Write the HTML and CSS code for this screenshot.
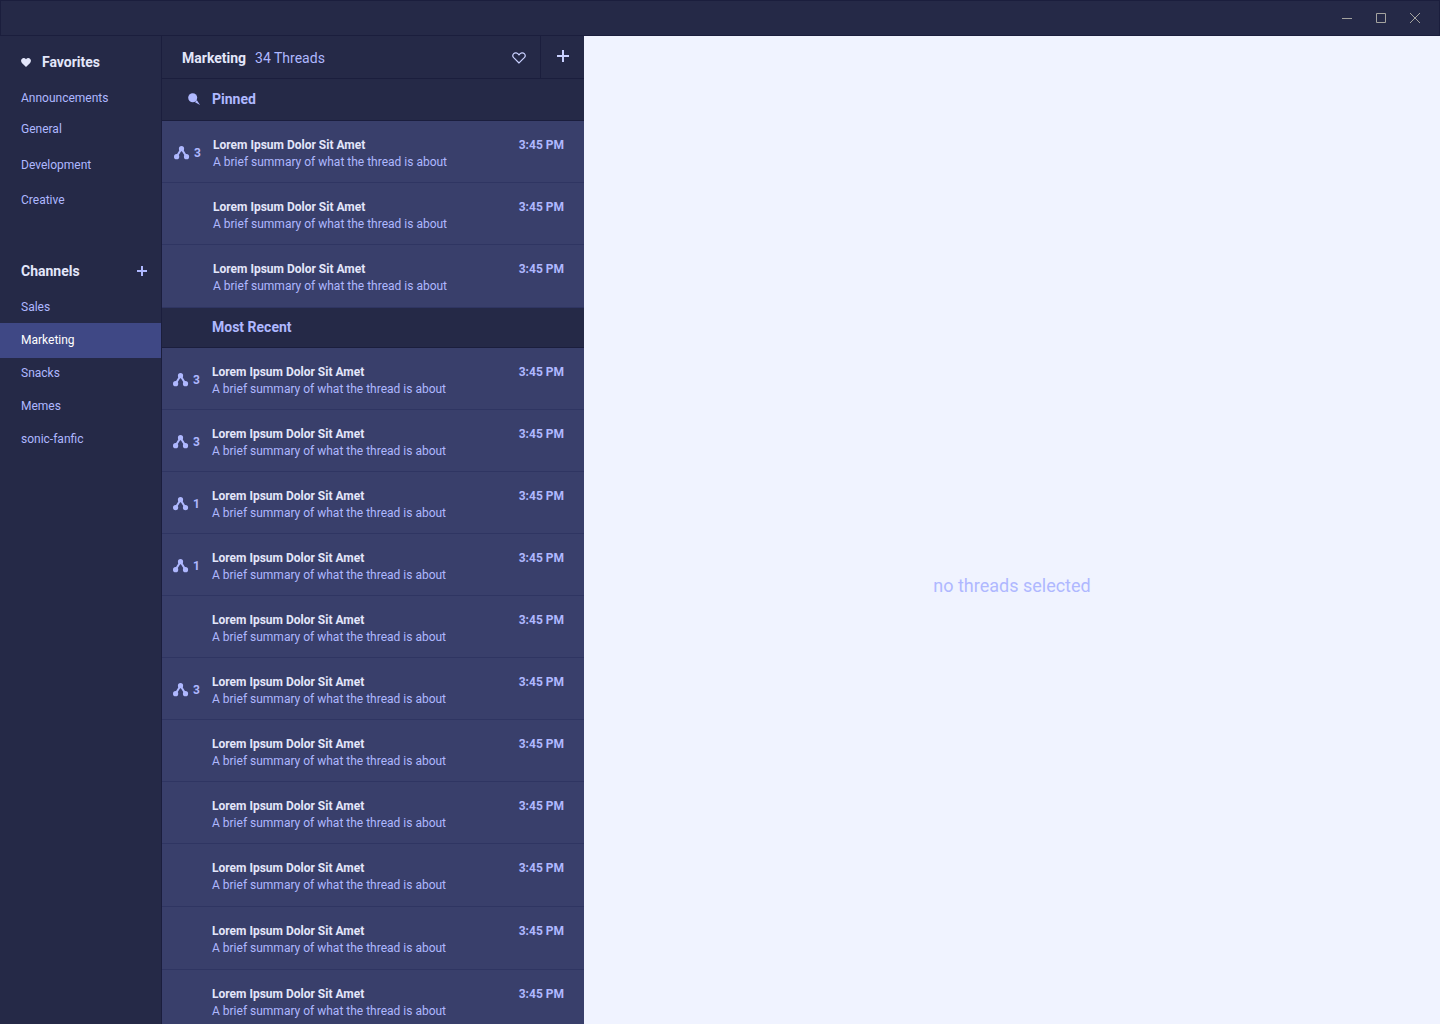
FILE: index.html
```html
<!DOCTYPE html>
<html lang="en">
<head>
<meta charset="utf-8">
<meta name="viewport" content="width=device-width, initial-scale=1">
<title>Threads</title>
<link rel="stylesheet" href="styles.css">
</head>
<body>
<svg class="sprite" aria-hidden="true">
  <symbol id="branch" viewBox="0 0 16 14">
    <path d="M7.500 2.700 2.500 10.700M7.500 2.700l5 8" fill="none" stroke="currentColor" stroke-width="2"/>
    <circle cx="7.500" cy="2.700" r="2.600" fill="currentColor"/>
    <circle cx="2.600" cy="10.700" r="2.600" fill="currentColor"/>
    <circle cx="12.500" cy="10.700" r="2.600" fill="currentColor"/>
  </symbol>
</svg>
<div class="app">
  <header class="titlebar">
    <button class="window-button" aria-label="Minimize"><svg width="10" height="10" viewBox="0 0 10 10"><path d="M0 5.5h10"/></svg></button>
    <button class="window-button" aria-label="Maximize"><svg width="10" height="10" viewBox="0 0 10 10"><path d="M.5.5h9v9h-9z"/></svg></button>
    <button class="window-button" aria-label="Close"><svg width="10" height="10" viewBox="0 0 10 10"><path d="m0 0 10 10M10 0 0 10"/></svg></button>
  </header>
  <div class="workspace">
    <nav class="sidebar">
      <section>
        <h2 class="sidebar-title">
          <svg class="heart" width="10" height="9" viewBox="0 0 10 9"><path d="M5 9 .9 4.9C-.2 3.800-.2 1.900.8.9 1.900-.2 3.900-.2 5 1.300 6.100-.2 8.100-.2 9.200.9c1 1 1 2.900-.1 4z" fill="currentColor"/></svg>
          Favorites
        </h2>
        <ul class="favorites">
          <li><a href="#">Announcements</a></li>
          <li><a href="#">General</a></li>
          <li><a href="#">Development</a></li>
          <li><a href="#">Creative</a></li>
        </ul>
      </section>
      <section class="channels-section">
        <h2 class="sidebar-title">
          Channels
          <button class="add-channel" aria-label="Add channel"><svg width="10" height="10" viewBox="0 0 10 10"><path d="M5 0v10M0 5h10" stroke="currentColor" stroke-width="2"/></svg></button>
        </h2>
        <ul class="channels">
          <li><a href="#">Sales</a></li>
          <li><a class="active" href="#" aria-current="page">Marketing</a></li>
          <li><a href="#">Snacks</a></li>
          <li><a href="#">Memes</a></li>
          <li><a href="#">sonic-fanfic</a></li>
        </ul>
      </section>
    </nav>
    <section class="threads">
      <header class="threads-header">
        <h1>Marketing</h1>
        <span class="count">34 Threads</span>
        <button class="favorite" aria-label="Favorite"><svg width="14" height="12" viewBox="0 0 14 12"><path d="M7 11 1.700 5.700C.6 4.500.6 2.800 1.700 1.700 3 .4 5.300.6 7 2.800 8.700.6 11 .4 12.300 1.700c1.100 1.100 1.100 2.800 0 4z" fill="none" stroke="currentColor" stroke-width="1.200"/></svg></button>
        <button class="new-thread" aria-label="New thread"><svg width="12" height="12" viewBox="0 0 12 12"><path d="M6 0v12M0 6h12" stroke="currentColor" stroke-width="2"/></svg></button>
      </header>
      <div class="scroll">
        <h2 class="group pinned">
          <svg width="12" height="12" viewBox="0 0 12 12"><path d="M7 9.200 12 12 8.800 7z" fill="currentColor"/><circle cx="4.700" cy="4.700" r="4.500" fill="currentColor"/></svg>
          Pinned
        </h2>
        <ul class="list list-pinned">
          <li class="thread"><span class="replies"><svg width="16" height="14"><use href="#branch"/></svg>3</span><div class="body"><h3>Lorem Ipsum Dolor Sit Amet</h3><p>A brief summary of what the thread is about</p></div><time>3:45 PM</time></li>
          <li class="thread"><span class="replies"></span><div class="body"><h3>Lorem Ipsum Dolor Sit Amet</h3><p>A brief summary of what the thread is about</p></div><time>3:45 PM</time></li>
          <li class="thread"><span class="replies"></span><div class="body"><h3>Lorem Ipsum Dolor Sit Amet</h3><p>A brief summary of what the thread is about</p></div><time>3:45 PM</time></li>
        </ul>
        <h2 class="group recent">Most Recent</h2>
        <ul class="list list-recent">
          <li class="thread"><span class="replies"><svg width="16" height="14"><use href="#branch"/></svg>3</span><div class="body"><h3>Lorem Ipsum Dolor Sit Amet</h3><p>A brief summary of what the thread is about</p></div><time>3:45 PM</time></li>
          <li class="thread"><span class="replies"><svg width="16" height="14"><use href="#branch"/></svg>3</span><div class="body"><h3>Lorem Ipsum Dolor Sit Amet</h3><p>A brief summary of what the thread is about</p></div><time>3:45 PM</time></li>
          <li class="thread"><span class="replies"><svg width="16" height="14"><use href="#branch"/></svg>1</span><div class="body"><h3>Lorem Ipsum Dolor Sit Amet</h3><p>A brief summary of what the thread is about</p></div><time>3:45 PM</time></li>
          <li class="thread"><span class="replies"><svg width="16" height="14"><use href="#branch"/></svg>1</span><div class="body"><h3>Lorem Ipsum Dolor Sit Amet</h3><p>A brief summary of what the thread is about</p></div><time>3:45 PM</time></li>
          <li class="thread"><span class="replies"></span><div class="body"><h3>Lorem Ipsum Dolor Sit Amet</h3><p>A brief summary of what the thread is about</p></div><time>3:45 PM</time></li>
          <li class="thread"><span class="replies"><svg width="16" height="14"><use href="#branch"/></svg>3</span><div class="body"><h3>Lorem Ipsum Dolor Sit Amet</h3><p>A brief summary of what the thread is about</p></div><time>3:45 PM</time></li>
          <li class="thread"><span class="replies"></span><div class="body"><h3>Lorem Ipsum Dolor Sit Amet</h3><p>A brief summary of what the thread is about</p></div><time>3:45 PM</time></li>
          <li class="thread"><span class="replies"></span><div class="body"><h3>Lorem Ipsum Dolor Sit Amet</h3><p>A brief summary of what the thread is about</p></div><time>3:45 PM</time></li>
          <li class="thread"><span class="replies"></span><div class="body"><h3>Lorem Ipsum Dolor Sit Amet</h3><p>A brief summary of what the thread is about</p></div><time>3:45 PM</time></li>
          <li class="thread"><span class="replies"></span><div class="body"><h3>Lorem Ipsum Dolor Sit Amet</h3><p>A brief summary of what the thread is about</p></div><time>3:45 PM</time></li>
          <li class="thread"><span class="replies"></span><div class="body"><h3>Lorem Ipsum Dolor Sit Amet</h3><p>A brief summary of what the thread is about</p></div><time>3:45 PM</time></li>
        </ul>
      </div>
    </section>
    <main class="reader"><p>no threads selected</p></main>
  </div>
</div>
</body>
</html>
```
FILE: styles.css
```css
:root {
  --dark: #252947;
  --line: #1b1e3d;
  --row: #393f6b;
  --row-line: #2f3562;
  --accent: #afb8ff;
  --light: #e3e6fa;
}

* { box-sizing: border-box; }

body {
  margin: 0;
  font-family: Roboto, sans-serif;
  font-size: 12px;
  line-height: 17px;
  color: var(--accent);
  background: #f0f3ff;
}

h1, h2, h3, p, ul { margin: 0; padding: 0; }
ul { list-style: none; }
a { color: inherit; text-decoration: none; }
svg { display: block; flex: none; }
.sprite { display: none; }

button {
  display: flex;
  align-items: center;
  justify-content: center;
  padding: 0;
  border: 0;
  background: none;
  color: inherit;
  font: inherit;
  cursor: pointer;
}

.app {
  display: flex;
  flex-direction: column;
  height: 100vh;
}

.titlebar {
  display: flex;
  justify-content: flex-end;
  flex: none;
  height: 36px;
  padding-right: 7px;
  background: var(--dark);
  border: 1px solid var(--line);
}

.window-button { width: 34px; }
.window-button svg { fill: none; stroke: #a4a39f; stroke-width: 1; }

.workspace {
  display: flex;
  flex: 1;
  min-height: 0;
}

.sidebar {
  flex: none;
  width: 162px;
  padding-top: 16px;
  overflow: hidden;
  background: var(--dark);
  border-right: 1px solid var(--line);
}

.sidebar-title {
  display: flex;
  align-items: center;
  padding: 0 14px 0 21px;
  font-size: 14px;
  line-height: 20px;
  font-weight: 700;
  color: var(--light);
}

.heart { margin-right: 11px; }

.add-channel {
  margin-left: auto;
  color: var(--accent);
}

.sidebar a {
  display: flex;
  align-items: center;
  height: 33px;
  padding-left: 21px;
}

.favorites { padding-top: 13px; }
.favorites a { height: 36px; }
.favorites li:first-child a { height: 26px; }
.favorites li:last-child a { height: 34px; }

.channels-section { margin-top: 44px; }
.channels { padding-top: 10px; }

.sidebar .active {
  color: #fff;
  background: #3f4885;
  box-shadow: 0 -1px #3f4885, 0 1px #3f4885;
}

.threads {
  display: flex;
  flex-direction: column;
  flex: none;
  width: 422px;
  background: var(--row);
}

.threads-header {
  display: flex;
  align-items: center;
  flex: none;
  height: 43px;
  padding: 2px 0 0 20px;
  font-size: 14px;
  line-height: 20px;
  background: var(--dark);
  border-bottom: 1px solid var(--line);
}

.threads-header h1 {
  margin-right: 9px;
  font-size: 14px;
  font-weight: 700;
  color: var(--light);
}

.favorite {
  margin-left: auto;
  margin-right: 14px;
  color: #c9d0ff;
}

.new-thread {
  width: 44px;
  height: 42px;
  margin-top: -2px;
  padding-bottom: 2px;
  border-left: 1px solid var(--line);
  color: #c9d0ff;
}

.scroll {
  flex: 1;
  min-height: 0;
  overflow-y: auto;
  scrollbar-width: none;
}

.group {
  display: flex;
  align-items: center;
  padding-bottom: 2px;
  font-size: 14px;
  line-height: 20px;
  font-weight: 700;
  background: var(--dark);
  border-bottom: 1px solid var(--line);
}

.pinned {
  gap: 12px;
  height: 42px;
  padding-left: 26px;
}

.recent {
  height: 40px;
  padding-left: 50px;
}

.thread {
  display: flex;
  height: 62px;
  padding: 16px 20px 0 11px;
  border-bottom: 1px solid var(--row-line);
}

.list-pinned .thread { padding-left: 12px; }
.list-pinned .thread:last-child,
.list-recent .thread:nth-child(n+9) { height: 63px; }

.replies {
  display: flex;
  align-items: center;
  gap: 4px;
  flex: none;
  width: 39px;
  height: 32px;
  font-weight: 700;
}

.body { flex: 1; }

.thread h3 {
  font-size: 12px;
  font-weight: 700;
  color: var(--light);
}

.thread time { font-weight: 700; }

.reader {
  display: flex;
  align-items: center;
  justify-content: center;
  flex: 1;
  padding-top: 112px;
  font-size: 18px;
  line-height: 24px;
}
```
